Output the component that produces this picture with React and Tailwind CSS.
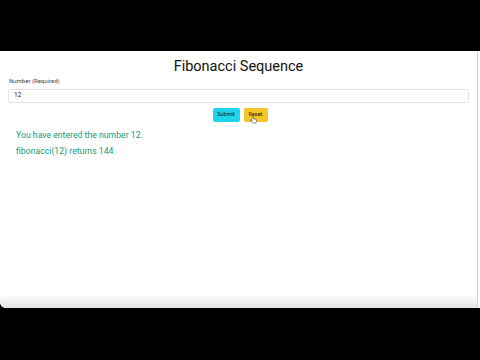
import React from 'react';

export default function App() {
  return (
    <div className="w-[480px] h-[360px] bg-black flex flex-col overflow-hidden" style={{ fontFamily: 'Roboto, "Liberation Sans", sans-serif' }}>
      <div className="h-[51px] shrink-0" />
      <div className="h-[257px] shrink-0 bg-white rounded-bl-md flex relative overflow-hidden">
        <div className="flex-1 flex flex-col">
          <h1 className="text-center text-[14.5px] leading-none text-[#111] mt-[9px]">Fibonacci Sequence</h1>
          <label className="text-[6px] font-normal text-[#444] ml-[9px] mt-[3.5px] leading-none">Number (Required)</label>
          <div className="mx-[8px] mt-[5px] h-[14px] border border-[#e4e4e4] rounded-[2px] flex items-center pl-[5px] text-[6.5px] text-[#222]">12</div>
          <div className="flex justify-center gap-[4px] mt-[5px] pl-[3px]">
            <button className="w-[27px] h-[14px] bg-[#1fd3ea] rounded-[2px] text-[5.5px] text-[#111] leading-none">Submit</button>
            <button className="relative w-[24px] h-[14px] bg-[#f6c528] rounded-[2px] text-[5.5px] text-[#111] leading-none">
              Reset
              <svg className="absolute left-[6px] top-[8px]" width="7" height="8" viewBox="0 0 14 16">
                <path d="M4 1.5v8l-1.5-1.5c-.8-.8-2 .3-1.3 1.2L5 14h7l1-5V7.5c0-.9-1.5-.9-1.5 0V7c0-.9-1.5-.9-1.5 0v-.5c0-.9-1.5-.9-1.5 0V6c0-.9-1.5-.9-1.5 0V1.5c0-1-1.5-1-1.5 0z" fill="white" stroke="#333" strokeWidth="1" />
              </svg>
            </button>
          </div>
          <div className="ml-[16px] mt-[4.5px] text-[#139b7a] text-[8.7px] leading-[16px]">
            <p>You have entered the number 12.</p>
            <p>fibonacci(12) returns 144.</p>
          </div>
          <div className="flex-1" />
          <div className="h-[14px] bg-gradient-to-b from-white to-[#e4e4e4]" />
        </div>
        <div className="w-[3px] bg-white border-l border-[#cfcfcf]" />
      </div>
      <div className="flex-1" />
    </div>
  );
}
